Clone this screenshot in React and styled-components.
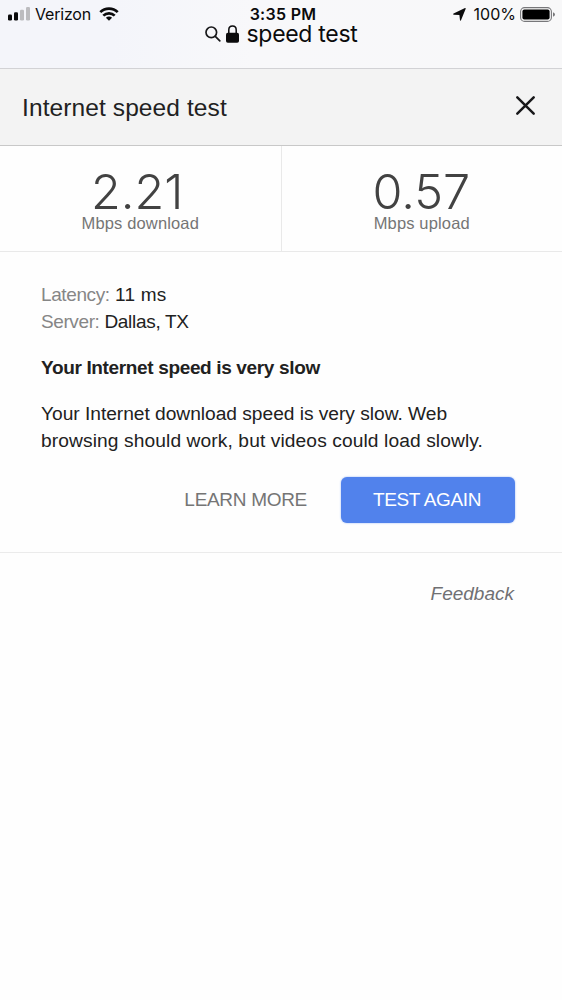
import React from 'react';
import styled, { createGlobalStyle } from 'styled-components';

const GlobalStyle = createGlobalStyle`
  * {
    box-sizing: border-box;
  }

  body {
    margin: 0;
    background-color: #fefefe;
    font-family: 'Liberation Sans', Arial, sans-serif;
  }
`;

const Screen = styled.div`
  width: 562px;
  min-height: 1000px;
  background-color: #fefefe;
`;

const BrowserTop = styled.header`
  height: 69px;
  background: linear-gradient(90deg, #f4f5fa 0%, #f4f5fa 20%, #f8f8fa 45%, #f8f8f9 100%);
  border-bottom: 1px solid #d2d2d5;
  font-family: Inter, sans-serif;
  color: #0b0b0c;
`;

const StatusBar = styled.div`
  display: grid;
  grid-template-columns: 1fr auto 1fr;
  height: 24px;
  padding: 4px 7px 0 8px;
  font-size: 16px;
  line-height: 20px;
`;

const StatusGroup = styled.div`
  display: flex;
  align-items: center;
  justify-content: ${({ $end }) => ($end ? 'flex-end' : 'flex-start')};

  svg {
    flex: none;
  }
`;

const Carrier = styled.span`
  margin: 0 8px 0 5px;
  letter-spacing: -0.2px;
`;

const Clock = styled.span`
  padding-left: 3px;
  font-weight: 600;
  letter-spacing: 0.3px;
`;

const Percent = styled.span`
  margin: 0 4px 0 8px;
`;

const AddressBar = styled.div`
  display: flex;
  align-items: center;
  justify-content: center;
  height: 20px;
  font-size: 23px;
  line-height: 20px;

  svg {
    flex: none;
  }
`;

const LockSlot = styled.span`
  display: flex;
  margin-left: 5px;
`;

const Query = styled.span`
  margin-left: 8px;
  letter-spacing: -0.3px;
`;

const TitleBar = styled.div`
  display: flex;
  align-items: center;
  justify-content: space-between;
  height: 77px;
  padding: 0 26px 0 22px;
  background-color: #f3f3f3;
  border-bottom: 1px solid #c8c8c8;
`;

const Title = styled.h1`
  margin: 2px 0 0;
  color: #212121;
  font-size: 24.5px;
  font-weight: 400;
  letter-spacing: 0.1px;
`;

const CloseButton = styled.button`
  display: flex;
  margin-top: -4px;
  padding: 0;
  border: none;
  background: transparent;
  cursor: pointer;
`;

const Results = styled.section`
  display: grid;
  grid-template-columns: 280.5px 281.5px;
  height: 106px;
  border-bottom: 1px solid #e9e9e9;
`;

const Result = styled.div`
  display: flex;
  flex-direction: column;
  align-items: center;
  padding-top: 21px;

  & + & {
    border-left: 1px solid #e9e9e9;
  }
`;

const Speed = styled.div`
  padding-right: ${({ $inset }) => $inset || 0}px;
  color: #424242;
  font-family: Inter, sans-serif;
  font-size: 48.5px;
  font-weight: 300;
  line-height: 50px;
`;

const Unit = styled.div`
  margin-top: -3px;
  color: #757575;
  font-size: 16.5px;
  line-height: 18px;
  letter-spacing: 0.15px;
`;

const Details = styled.section`
  height: 301px;
  padding: 29px 47px 0 41px;
  border-bottom: 1px solid #ebebeb;
  color: #212121;
  font-size: 19px;
  line-height: 27px;
`;

const Fact = styled.div`
  letter-spacing: ${({ $spacing }) => $spacing};
`;

const Label = styled.span`
  color: #868686;
  letter-spacing: -0.4px;
`;

const Verdict = styled.h2`
  margin: 19px 0;
  font-size: 19px;
  font-weight: 700;
  line-height: 27px;
  letter-spacing: -0.35px;
`;

const Advice = styled.p`
  margin: 0;
  font-size: 19.2px;
  white-space: nowrap;
`;

const AdviceLine = styled.span`
  display: block;
  letter-spacing: ${({ $spacing }) => $spacing};
`;

const Actions = styled.div`
  display: flex;
  align-items: center;
  justify-content: flex-end;
  gap: 34px;
  margin-top: 23px;
`;

const LearnMore = styled.button`
  padding: 0;
  border: none;
  background: transparent;
  color: #757575;
  font-family: inherit;
  font-size: 19px;
  letter-spacing: -0.3px;
`;

const TestAgain = styled.button`
  width: 174px;
  height: 46px;
  padding: 0 2px 0 0;
  border: none;
  border-radius: 6px;
  background-color: #5182ec;
  box-shadow: 0 0 2px #8fb0f5;
  color: #fff;
  font-family: inherit;
  font-size: 19px;
  letter-spacing: -0.35px;
`;

const Footer = styled.footer`
  padding: 29px 48px 0 0;
  color: #707073;
  font-size: 19px;
  font-style: italic;
  line-height: 24px;
  text-align: right;
`;

const SignalIcon = () => (
  <svg width="22" height="14" viewBox="0 0 22 14">
    <rect x="0" y="7.5" width="4" height="6" rx="1.2" fill="#0b0b0c" />
    <rect x="6" y="5.2" width="4" height="8.3" rx="1.2" fill="#0b0b0c" />
    <rect x="12" y="2.7" width="4" height="10.8" rx="1.2" fill="#bcbcbf" />
    <rect x="18" y="0" width="4" height="13.5" rx="1.2" fill="#bcbcbf" />
  </svg>
);

const WifiIcon = () => (
  <svg width="20" height="14" viewBox="0 0 20 14" fill="none" stroke="#0b0b0c" strokeWidth="2.7">
    <path d="M1.3 5.1C6 .4 14 .4 18.7 5.1" />
    <path d="M4.3 8.6C7.5 5.5 12.5 5.5 15.7 8.6" />
    <path d="M10 13.8L6.9 10.8C8.7 9.2 11.3 9.2 13.1 10.8Z" fill="#0b0b0c" stroke="none" />
  </svg>
);

const LocationIcon = () => (
  <svg width="13" height="13" viewBox="0 0 13 13" fill="#0b0b0c">
    <path d="M12.7.7L8 12.3Q7.3 13.3 7 12.2L6.4 7L.9 6.8Q-.5 6.5.6 5.6L12 .1Q13 0 12.7.7Z" />
  </svg>
);

const BatteryIcon = () => (
  <svg width="35" height="15" viewBox="0 0 35 15">
    <rect x=".6" y=".6" width="30.8" height="13.8" rx="4" fill="none" stroke="#77777a" strokeWidth="1.1" />
    <rect x="2.4" y="2.4" width="27.2" height="10.2" rx="2" fill="#000" />
    <path d="M33 5.2Q35 6 35 7.5Q35 9 33 9.8Z" fill="#77777a" />
  </svg>
);

const SearchIcon = () => (
  <svg width="16" height="16" viewBox="0 0 16 16" fill="none" stroke="#18181a" strokeWidth="1.7" strokeLinecap="round">
    <circle cx="6.3" cy="6.3" r="5.3" />
    <path d="M10.3 10.3L14.8 14.8" />
  </svg>
);

const LockIcon = () => (
  <svg width="13" height="18" viewBox="0 0 13 18">
    <path d="M2.8 8.5V4.9C2.8-.3 10.2-.3 10.2 4.9V8.5" fill="none" stroke="#0b0b0c" strokeWidth="1.5" />
    <rect x="0" y="7.7" width="13" height="10" rx="1.8" fill="#0b0b0c" />
  </svg>
);

const CloseIcon = () => (
  <svg width="21" height="21" viewBox="0 0 21 21" fill="none" stroke="#18181a" strokeWidth="2.5" strokeLinecap="round">
    <path d="M2.3 2.3L18.7 18.7M18.7 2.3L2.3 18.7" />
  </svg>
);

function App() {
  return (
    <>
      <GlobalStyle />
      <Screen>
        <BrowserTop>
          <StatusBar>
            <StatusGroup>
              <SignalIcon />
              <Carrier>Verizon</Carrier>
              <WifiIcon />
            </StatusGroup>
            <Clock>3:35 PM</Clock>
            <StatusGroup $end>
              <LocationIcon />
              <Percent>100%</Percent>
              <BatteryIcon />
            </StatusGroup>
          </StatusBar>
          <AddressBar>
            <SearchIcon />
            <LockSlot>
              <LockIcon />
            </LockSlot>
            <Query>speed test</Query>
          </AddressBar>
        </BrowserTop>

        <TitleBar>
          <Title>Internet speed test</Title>
          <CloseButton aria-label="Close">
            <CloseIcon />
          </CloseButton>
        </TitleBar>

        <Results>
          <Result>
            <Speed $inset={6}>2.21</Speed>
            <Unit>Mbps download</Unit>
          </Result>
          <Result>
            <Speed $inset={1}>0.57</Speed>
            <Unit>Mbps upload</Unit>
          </Result>
        </Results>

        <Details>
          <Fact $spacing="0.2px">
            <Label>Latency:</Label> 11 ms
          </Fact>
          <Fact $spacing="-0.3px">
            <Label>Server:</Label> Dallas, TX
          </Fact>
          <Verdict>Your Internet speed is very slow</Verdict>
          <Advice>
            <AdviceLine $spacing="-0.03px">Your Internet download speed is very slow. Web</AdviceLine>
            <AdviceLine $spacing="0.1px">browsing should work, but videos could load slowly.</AdviceLine>
          </Advice>
          <Actions>
            <LearnMore>LEARN MORE</LearnMore>
            <TestAgain>TEST AGAIN</TestAgain>
          </Actions>
        </Details>

        <Footer>Feedback</Footer>
      </Screen>
    </>
  );
}

export default App;
